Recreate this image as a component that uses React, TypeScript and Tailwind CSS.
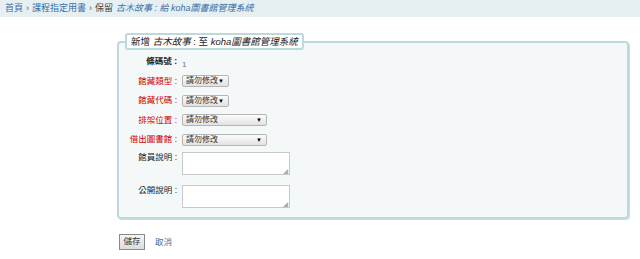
import React from 'react'

const font = { fontFamily: '"Liberation Sans", "Noto Sans CJK TC", sans-serif' }

// dropdown stub, width set per row
const Select = ({ wide }: { wide?: boolean }) => (
  <div
    className={`flex h-[12px] items-center justify-between overflow-hidden whitespace-nowrap rounded-[2px] border border-[#b5b5b5] bg-gradient-to-b from-[#fbfbfb] to-[#e2e2e2] pl-[3px] pr-[4px] text-[8px] leading-[10px] text-[#333] ${
      wide ? 'w-[85px]' : 'w-[47px]'
    }`}
  >
    <span>請勿修改</span>
    <span className="text-[6px] text-black">▼</span>
  </div>
)

const Row = ({ label, required, bold, children }: { label: string; required?: boolean; bold?: boolean; children: React.ReactNode }) => (
  <div className="flex h-[19.5px] items-center">
    <div
      className={`w-[52px] shrink-0 whitespace-nowrap text-right text-[8.5px] ${
        required ? 'text-[#cc0000]' : 'text-[#222]'
      } ${bold ? 'font-bold' : ''}`}
    >
      {label} :
    </div>
    <div className="ml-[5px]">{children}</div>
  </div>
)

const NoteRow = ({ label, className }: { label: string; className?: string }) => (
  <div className={`flex items-start ${className ?? ''}`}>
    <div className="w-[52px] shrink-0 whitespace-nowrap text-right text-[8.5px] leading-[10px] text-[#222]">{label} :</div>
    <div className="relative ml-[5px] h-[23px] w-[108px] border border-[#c9c9c9] bg-white">
      <span className="absolute bottom-0 right-[1px] text-[5px] leading-[5px] text-[#aaa]">◢</span>
    </div>
  </div>
)

export default function App() {
  return (
    <div className="min-h-[259px] w-[640px] bg-white" style={font}>
      {/* Breadcrumb */}
      <div className="flex h-[17px] items-center bg-[#e6eff2] pl-[5px] text-[9px] text-[#3a6ea5]">
        <span>首頁</span>
        <span className="mx-[3px] text-[#555]">›</span>
        <span>課程指定用書</span>
        <span className="mx-[3px] text-[#555]">›</span>
        <span className="text-[#444]">保留</span>
        <span className="ml-[3px] italic">古木故事 : 給 koha圖書館管理系統</span>
      </div>

      {/* Form */}
      <fieldset className="ml-[117px] mt-[16px] w-[512px] rounded-[4px] border-2 border-[#bcd9db] bg-[#f4f8f9] px-[6px] pb-[9px] pt-[2px] shadow-[1px_1px_0_#c6dfe0]">
        <legend className="rounded-[3px] border-2 border-[#bcd9db] bg-white px-[4px] text-[9.5px] leading-[13px] text-[#222]">
          新增 <i>古木故事</i> : 至 <i>koha圖書館管理系統</i>
        </legend>
        <Row label="條碼號" bold>
          <span className="text-[8px] text-[#777]">1</span>
        </Row>
        <Row label="館藏類型" required>
          <Select />
        </Row>
        <Row label="館藏代碼" required>
          <Select />
        </Row>
        <Row label="排架位置" required>
          <Select wide />
        </Row>
        <Row label="借出圖書館" required>
          <Select wide />
        </Row>
        <NoteRow label="館員說明" className="mt-[2px]" />
        <NoteRow label="公開說明" className="mt-[10px]" />
      </fieldset>

      {/* Actions */}
      <div className="ml-[119px] mt-[15px] flex items-center">
        <button className="h-[16px] w-[26px] border border-[#8a8a8a] bg-gradient-to-b from-[#f4f4f4] to-[#dcdcdc] text-[8.5px] text-[#333]">
          儲存
        </button>
        <span className="ml-[10px] mt-[2px] text-[8.5px] text-[#3a6ea5]">取消</span>
      </div>
    </div>
  )
}
